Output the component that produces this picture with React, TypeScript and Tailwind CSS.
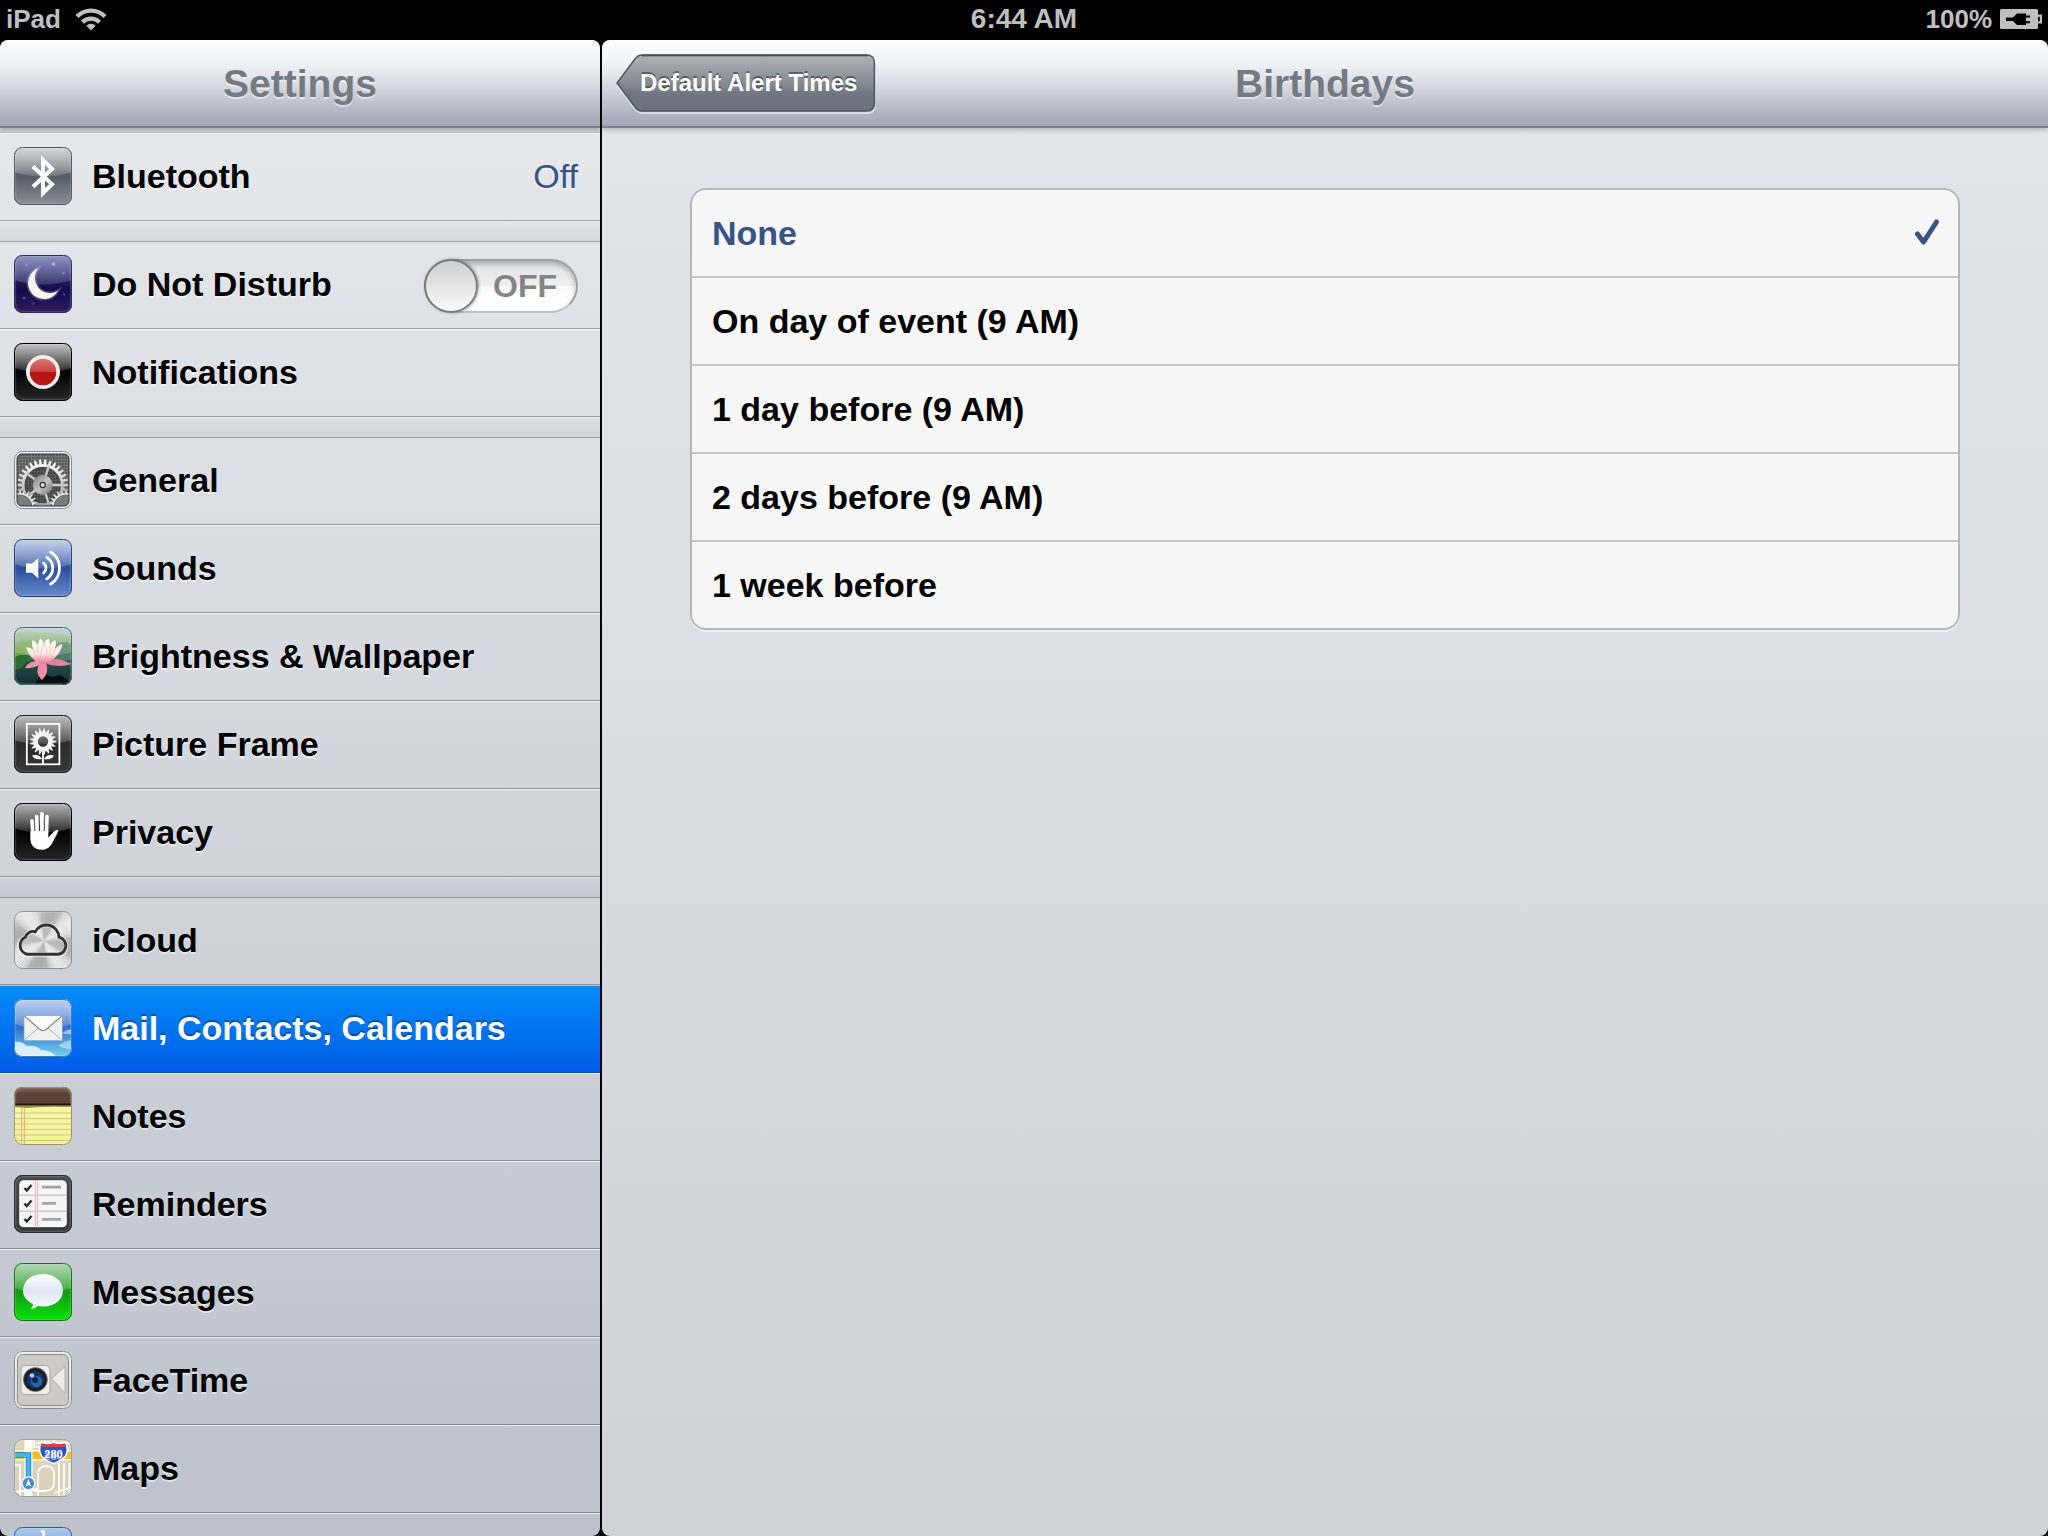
import React, { useState } from 'react';

type IconProps = { id: string };

// ---------- icon helpers ----------

const polar = (cx: number, cy: number, r: number, deg: number) => {
  const a = (deg * Math.PI) / 180;
  return `${(cx + r * Math.cos(a)).toFixed(2)} ${(cy + r * Math.sin(a)).toFixed(2)}`;
};

const cogPath = (cx: number, cy: number, rOut: number, rIn: number, teeth: number, tip = 0.14, root = 0.32) => {
  const step = 360 / teeth;
  let d = '';
  for (let i = 0; i < teeth; i++) {
    const a = i * step;
    d += `${i === 0 ? 'M' : 'L'}${polar(cx, cy, rIn, a - step * root)} L${polar(cx, cy, rOut, a - step * tip)} L${polar(cx, cy, rOut, a + step * tip)} L${polar(cx, cy, rIn, a + step * root)} `;
  }
  return d + 'Z';
};

const Tile: React.FC<{
  id: string;
  stops: [string, string][];
  edge: string;
  gloss?: boolean;
  glossTop?: number;
  children?: React.ReactNode;
  over?: React.ReactNode;
}> = ({ id, stops, edge, gloss = true, glossTop = 0.65, children, over }) => (
  <svg viewBox="0 0 58 58" className="size-[58px] shrink-0" aria-hidden="true">
    <defs>
      <linearGradient id={`${id}-bg`} x1="0" y1="0" x2="0" y2="1">
        {stops.map(([offset, color]) => (
          <stop key={offset} offset={offset} stopColor={color} />
        ))}
      </linearGradient>
      <linearGradient id={`${id}-gloss`} x1="0" y1="0" x2="0" y2="1">
        <stop offset="0" stopColor="#fff" stopOpacity={glossTop} />
        <stop offset="1" stopColor="#fff" stopOpacity="0.15" />
      </linearGradient>
      <clipPath id={`${id}-clip`}>
        <rect width="58" height="58" rx="8.5" />
      </clipPath>
    </defs>
    <g clipPath={`url(#${id}-clip)`}>
      <rect width="58" height="58" fill={`url(#${id}-bg)`} />
      {children}
      {gloss && <path d="M0 0H58V25Q29 34 0 25Z" fill={`url(#${id}-gloss)`} />}
      {over}
    </g>
    <rect x="1.6" y="1.6" width="54.8" height="54.8" rx="7.2" fill="none" stroke="#fff" strokeOpacity="0.18" />
    <rect x="0.5" y="0.5" width="57" height="57" rx="8" fill="none" stroke={edge} />
  </svg>
);

// ---------- sidebar icons ----------

const BluetoothIcon = ({ id }: IconProps) => (
  <Tile
    id={id}
    edge="#55595f"
    glossTop={0.65}
    stops={[['0', '#8d9096'], ['0.5', '#565c66'], ['1', '#8b8f94']]}
    over={<path d="M19 19.5L38 37.2L29 46V13L38 22L19 39.8" fill="none" stroke="#fff" strokeWidth="4" strokeMiterlimit="10" />}
  />
);

const MoonIcon = ({ id }: IconProps) => (
  <Tile
    id={id}
    edge="#2b2d66"
    glossTop={0.42}
    stops={[['0', '#3d4796'], ['0.48', '#1b1455'], ['0.6', '#140b4c'], ['1', '#321a5e']]}
    over={
      <>
        <g fill="#b9bfe8">
          <circle cx="39.5" cy="9" r="1.8" opacity="0.8" />
          <circle cx="12.5" cy="10" r="1.3" opacity="0.5" />
          <circle cx="49.5" cy="18" r="1.2" opacity="0.5" />
          <circle cx="50" cy="39.5" r="1.1" opacity="0.4" />
          <circle cx="10" cy="43" r="1.5" opacity="0.35" />
          <circle cx="19.5" cy="48.5" r="1.3" opacity="0.25" />
        </g>
        <path d="M24.5 13A16 16 0 1 0 44 35.8A15.2 15.2 0 0 1 24.5 13Z" fill="none" stroke="#aaa6d8" strokeWidth="3" opacity="0.35" />
        <path d="M24.5 13A16 16 0 1 0 44 35.8A15.2 15.2 0 0 1 24.5 13Z" fill="#f8f6ee" />
      </>
    }
  />
);

const NotificationsIcon = ({ id }: IconProps) => (
  <Tile
    id={id}
    edge="#000"
    glossTop={0.75}
    stops={[['0', '#1d1d1d'], ['0.5', '#000'], ['1', '#2a2a2a']]}
    over={
      <>
        <defs>
          <linearGradient id={`${id}-red`} x1="0" y1="0" x2="0" y2="1">
            <stop offset="0" stopColor="#dc7a78" />
            <stop offset="0.48" stopColor="#c8433f" />
            <stop offset="0.52" stopColor="#b41412" />
            <stop offset="1" stopColor="#bd1917" />
          </linearGradient>
        </defs>
        <circle cx="29" cy="29" r="17" fill="#efefef" />
        <circle cx="29" cy="29" r="13.3" fill={`url(#${id}-red)`} />
      </>
    }
  />
);

const GeneralIcon = ({ id }: IconProps) => (
  <svg viewBox="0 0 58 58" className="size-[58px] shrink-0" aria-hidden="true">
    <defs>
      <pattern id={`${id}-mesh`} width="3" height="3" patternUnits="userSpaceOnUse">
        <rect width="3" height="3" fill="#747474" />
        <circle cx="1" cy="1" r="0.8" fill="#333" />
      </pattern>
      <linearGradient id={`${id}-cog`} x1="0" y1="0" x2="0" y2="1">
        <stop offset="0" stopColor="#fff" />
        <stop offset="0.55" stopColor="#c4c4c4" />
        <stop offset="1" stopColor="#999" />
      </linearGradient>
      <linearGradient id={`${id}-hub`} x1="0" y1="0" x2="1" y2="1">
        <stop offset="0" stopColor="#777" />
        <stop offset="0.5" stopColor="#c4c4c4" />
        <stop offset="1" stopColor="#707070" />
      </linearGradient>
      <clipPath id={`${id}-clip`}>
        <rect x="3" y="3" width="52" height="52" rx="5" />
      </clipPath>
    </defs>
    <rect x="0.5" y="0.5" width="57" height="57" rx="8" fill="#f0f0f0" stroke="#8b8b8b" />
    <g clipPath={`url(#${id}-clip)`}>
      <rect width="58" height="58" fill={`url(#${id}-mesh)`} />
      <circle cx="28.700" cy="34" r="17.500" fill="#222" opacity="0.35" />
      <path
        d={`${cogPath(28.7, 34, 25.5, 21, 30, 0.18, 0.32)} M46.7 34A18 18 0 1 0 10.7 34A18 18 0 1 0 46.7 34Z`}
        fill={`url(#${id}-cog)`}
        fillRule="evenodd"
      />
      <circle cx="28.7" cy="34" r="17.6" fill="none" stroke="#333" strokeWidth="0.8" />
      {[-72, 0, 72, 144, 216].map((deg) => (
        <path key={deg} d={`M${polar(28.7, 34, 6, deg)} L${polar(28.7, 34, 20, deg)}`} stroke="#c9c9c9" strokeWidth="2.4" />
      ))}
      <circle cx="28.7" cy="34" r="10" fill={`url(#${id}-hub)`} />
      <circle cx="28.7" cy="34" r="2.6" fill="#ddd" stroke="#333" strokeWidth="1.2" />
      <path d={cogPath(6, 56, 18, 14, 24)} fill="#f0f0f0" stroke="#444" strokeWidth="0.4" />
      <circle cx="6" cy="56" r="12" fill="#7b7b7b" stroke="#666" />
      <path d={cogPath(52, 56, 18, 14, 24)} fill="#f0f0f0" stroke="#444" strokeWidth="0.4" />
      <circle cx="52" cy="56" r="12" fill="#7b7b7b" stroke="#666" />
    </g>
    <rect x="3" y="3" width="52" height="52" rx="5" fill="none" stroke="#333" />
  </svg>
);

const SoundsIcon = ({ id }: IconProps) => (
  <Tile
    id={id}
    edge="#26417c"
    glossTop={0.65}
    stops={[['0', '#5f82c8'], ['0.5', '#2a4d9c'], ['1', '#6b8dcc']]}
    over={
      <>
        <path d="M12 24.5H18L24.3 19V39.5L18 33.8H12Z" fill="#fff" />
        <g fill="none" stroke="#fff" strokeWidth="2.8" strokeLinecap="round">
          <path d="M29.6 24.2A6.2 6.2 0 0 1 29.6 34" />
          <path d="M32.8 18.4A12.6 12.6 0 0 1 32.8 39.8" />
          <path d="M36.6 13A19 19 0 0 1 36.6 45.2" />
        </g>
      </>
    }
  />
);

const LotusIcon = ({ id }: IconProps) => (
  <Tile
    id={id}
    edge="#45705f"
    glossTop={0.35}
    stops={[['0', '#a9c58e'], ['0.35', '#6d9a6c'], ['0.6', '#24504c'], ['1', '#122c30']]}
  >
    <defs>
      <linearGradient id={`${id}-petal`} x1="0" y1="0" x2="0" y2="1">
        <stop offset="0" stopColor="#fffdf2" />
        <stop offset="0.6" stopColor="#fce4de" />
        <stop offset="1" stopColor="#e87590" />
      </linearGradient>
    </defs>
    <path d="M0 6Q18 2 58 9V0H0Z" fill="#9dbccb" />
    <path d="M0 17Q14 11 30 16L14 34L0 40Z" fill="#6aa548" />
    <path d="M0 30Q10 26 18 29L6 42L0 43Z" fill="#2c6f30" />
    <path d="M40 18Q52 12 58 18V32Q48 36 40 32Z" fill="#4a7c62" />
    <path d="M20 58L28 46L38 50L46 48L58 56V58Z" fill="#050d0e" />
    <path d="M27 33Q14 34 11 41Q20 42 29 36Z" fill="#f297a8" />
    <path d="M33 32Q46 31 58 37Q46 41 33 37Z" fill="#e87f98" />
    <path d="M26 35Q20 46 28 53Q36 46 32 35Z" fill="#f08ba2" />
    <path d="M29.500 37Q16 34 12 20Q16 20 19.500 23Q17 17 18.500 13Q22 14.500 24 18Q24 14 26.500 11.500Q29 14 30 17Q31 13 34.500 11.500Q36 14 36 18Q38 14.500 41.500 13Q42.500 18 41 22Q45 17.500 48.500 17Q45 32 29.500 37Z" fill={`url(#${id}-petal)`} />
    <g fill="none" stroke="#e9a9b2" strokeWidth="0.700">
      <path d="M19.500 23Q22 30 28 35M24 18Q22 27 28 34M36 18Q38 27 31 34M41 22Q39 30 32 35M30 17Q24 26 29 34Q36 26 30 17" />
    </g>
  </Tile>
);

const FrameIcon = ({ id }: IconProps) => (
  <Tile
    id={id}
    edge="#1f1f1f"
    glossTop={0.65}
    stops={[['0', '#4a4a4a'], ['0.5', '#2b2b2b'], ['1', '#383838']]}
    over={
      <>
        <rect x="12.8" y="8.9" width="32.600" height="40.400" fill="none" stroke="#fff" strokeWidth="1.8" />
        <path
          d={`${cogPath(29, 26.5, 13.3, 9.6, 17, 0.08, 0.46)} M34.2 26.5A5.2 5.2 0 1 0 23.8 26.5A5.2 5.2 0 1 0 34.2 26.5Z`}
          fill="#f5f5f5"
          fillRule="evenodd"
        />
        <path d="M29 36V49" stroke="#fff" strokeWidth="1.8" />
        <path d="M28 44Q21 45.500 18 40.500Q25 38.500 28 44ZM30 44Q37 45.500 40 40.500Q33 38.500 30 44Z" fill="#fff" />
      </>
    }
  />
);

const PrivacyIcon = ({ id }: IconProps) => (
  <Tile
    id={id}
    edge="#000"
    glossTop={0.65}
    stops={[['0', '#2e2e2e'], ['0.5', '#020202'], ['1', '#262626']]}
    over={
      <g stroke="#fff" strokeLinecap="round" fill="none">
        <path d="M18 17.700L19 33" strokeWidth="3.600" />
        <path d="M22.700 13.500L23.200 30" strokeWidth="3.600" />
        <path d="M27.900 11L27.900 30" strokeWidth="3.800" />
        <path d="M33 13.500L32.500 30" strokeWidth="3.600" />
        <path d="M16.300 28H34.300V34.500L40 28.500Q42.500 26 44.500 27.500C43.500 31 41 34 39 38.500C36.500 44 33 46.800 28 46.800C20.500 46.800 16.600 42.500 16.400 36Z" fill="#fff" stroke="none" />
      </g>
    }
  />
);

const CloudIcon = ({ id }: IconProps) => (
  <Tile id={id} edge="#8f8f8f" gloss={false} stops={[['0', '#cbcbcb'], ['1', '#c2c2c2']]}>
    {/* brushed steel rays */}
    {[0, 45, 90, 135, 180, 225, 270, 315].map((deg, i) =>
      [24, 17, 10].map((spread) => (
        <path
          key={`${deg}-${spread}`}
          d={`M30 30L${polar(30, 30, 50, deg + 12 - spread)}L${polar(30, 30, 50, deg + 12 + spread)}Z`}
          fill={i % 2 ? '#fff' : '#848484'}
          opacity={i % 2 ? 0.24 : 0.14}
        />
      )),
    )}
    <path
      d="M13.500 43.800A9 9 0 0 1 11.500 26.200A7.600 7.600 0 0 1 21.200 20.800A12.600 12.600 0 0 1 45 26.200A8.900 8.900 0 0 1 44.500 43.800Z"
      fill="#fff"
      fillOpacity="0.15"
      stroke="#fff"
      strokeOpacity="0.6"
      strokeWidth="4.600"
    />
    <path
      d="M13.500 43.300A9 9 0 0 1 11.500 26.200A7.600 7.600 0 0 1 21.200 20.800A12.600 12.600 0 0 1 45 26.200A8.700 8.700 0 0 1 44.500 43.300Z"
      fill="none"
      stroke="#333"
      strokeWidth="2.900"
    />
  </Tile>
);

const MailIcon = ({ id }: IconProps) => (
  <Tile
    id={id}
    edge="#3f78b8"
    glossTop={0.55}
    stops={[['0', '#6f9be2'], ['0.5', '#2f6fcb'], ['0.75', '#4ba4e0'], ['1', '#7fd0ee']]}
    over={
      <>
        <g fill="#fff">
          <path d="M0 43Q8 42 13 47Q22 46 27 51Q38 51 42 58H0Z" opacity="0.75" />
          <path d="M44 47Q50 42 58 41V50Q50 50 44 47Z" opacity="0.45" />
          <path d="M48 34Q52 31 58 30V35Q52 36 48 34Z" opacity="0.5" />
        </g>
        <rect x="10" y="16.500" width="38.300" height="25.200" fill="#f1f1f1" stroke="#8aa0ba" strokeWidth="0.700" />
        <path d="M10.500 41L24.500 29M47.800 41L33.800 29" stroke="#a8a8a8" strokeWidth="0.900" />
        <path d="M10.500 17L29 33L47.800 17Z" fill="#fdfdfd" />
        <path d="M10.500 17L26 30.500Q29 33 32 30.500L47.800 17" fill="none" stroke="#8a8a8a" strokeWidth="1.200" />
      </>
    }
  />
);

const NotesIcon = ({ id }: IconProps) => (
  <Tile id={id} edge="#9a9468" gloss={false} stops={[['0', '#faf6a8'], ['1', '#f6f29a']]}>
    {[26, 31.5, 37, 42.5, 48, 53.5].map((y) => (
      <path key={y} d={`M0 ${y}H58`} stroke="#c4c386" strokeWidth="0.900" />
    ))}
    <path d="M7.700 19V58M10.400 19V58" stroke="#d6a070" strokeWidth="0.800" />
    <path d="M0 18H58V20Q30 19 14 21L0 20Z" fill="#8f8a4d" />
    <rect width="58" height="17" fill="#5d443b" />
    <rect width="58" height="5" fill="#6d544b" />
    <rect y="16.500" width="58" height="1.800" fill="#1f1310" />
  </Tile>
);

const RemindersIcon = ({ id }: IconProps) => (
  <Tile id={id} edge="#2a2b2c" gloss={false} stops={[['0', '#4c4e50'], ['1', '#3a3b3c']]}>
    <rect x="4.700" y="4.700" width="48.600" height="48" rx="5" fill="#f5f5f5" stroke="#1c1c1c" strokeWidth="0.800" />
    <path d="M5 20.200H53M5 36.200H53" stroke="#b9b9b9" strokeWidth="1" />
    <path d="M21.400 5V52.500M23.600 5V52.500" stroke="#f2a9b4" strokeWidth="0.900" />
    <path d="M28 12.200H47M28 28.300H42M28 44.300H47" stroke="#a3a3a3" strokeWidth="2.800" />
    {[8.5, 24, 39.5].map((y) => (
      <path key={y} d={`M10.500 ${y + 4.5}L12.800 ${y + 7}L17.500 ${y + 1.5}`} fill="none" stroke="#2b2b2b" strokeWidth="2.400" />
    ))}
  </Tile>
);

const MessagesIcon = ({ id }: IconProps) => (
  <Tile
    id={id}
    edge="#1f6d22"
    glossTop={0.6}
    stops={[['0', '#3f9e41'], ['0.5', '#129a12'], ['1', '#06e406']]}
    over={
      <>
        <defs>
          <linearGradient id={`${id}-bubble`} x1="0" y1="0" x2="0" y2="1">
            <stop offset="0" stopColor="#fff" />
            <stop offset="0.5" stopColor="#dfe7f3" />
            <stop offset="1" stopColor="#fafcff" />
          </linearGradient>
        </defs>
        <path
          d="M29 11C40.500 11 49 18 49 27.500C49 37 40.500 43.500 29 43.500C27 43.500 25.500 43.300 24 43C21.500 45 19 46 16.500 46C18 44.500 19 43 19 41C12.800 38.300 9 33.500 9 27.500C9 18 17.500 11 29 11Z"
          fill={`url(#${id}-bubble)`}
        />
      </>
    }
  />
);

const FaceTimeIcon = ({ id }: IconProps) => (
  <Tile id={id} edge="#8a8a88" gloss={false} stops={[['0', '#efefee'], ['1', '#dededc']]}>
    <rect x="3.500" y="3.500" width="51" height="51" rx="5" fill="#cbcac6" stroke="#8c8b88" />
    <rect x="7" y="14.500" width="29" height="29" rx="4.500" fill="#efefef" stroke="#a9a9a7" />
    <path d="M37.700 27.800L51 15.500V42Z" fill="#ececec" stroke="#a9a9a7" strokeWidth="0.800" />
    <circle cx="21.400" cy="28.600" r="12" fill="#1c1e22" stroke="#777" strokeWidth="0.800" />
    <circle cx="21.400" cy="28.600" r="8.600" fill="#12356b" />
    <circle cx="22.500" cy="30.500" r="5.500" fill="#2a63ad" />
    <circle cx="21" cy="29" r="3" fill="#0d2348" />
    <circle cx="18" cy="24.500" r="2.300" fill="#a9cdf0" />
  </Tile>
);

const MapsIcon = ({ id }: IconProps) => (
  <Tile id={id} edge="#a09c92" gloss={false} stops={[['0', '#e0d6c0'], ['1', '#dad0ba']]}>
    <path d="M20 0V8H28V3H34V8M22 4H58M40 0V8" fill="none" stroke="#fffdf7" strokeWidth="2" />
    <path d="M0 26H6V58M24 58V36Q24 27 32 27Q40 27 40 36V44Q40 52 30 52H20M45 24V58M50 24V56M55.500 24V58M40 54L58 48M0 53L24 50" fill="none" stroke="#fffdf7" strokeWidth="1.800" />
    <rect y="11" width="58" height="10.500" fill="#fff8e2" />
    <rect y="12.500" width="58" height="7.500" fill="#f7bb1d" />
    <rect x="10.500" width="8" height="58" fill="#fffdf7" />
    <path d="M0 16H14.500V40" fill="none" stroke="#1f7fc4" strokeWidth="5.400" />
    <path d="M0 16H14.500V40" fill="none" stroke="#3db4f5" strokeWidth="3.800" />
    <circle cx="14.400" cy="44.300" r="6.400" fill="#3f8fd2" stroke="#fff" strokeWidth="1.200" />
    <path d="M14.400 40L17.200 47.500L14.400 46L11.600 47.500Z" fill="#fff" />
    <path d="M27 3.500Q33 5.500 39.500 3.500Q46 5.500 51.500 3.500Q55 11 51.500 17Q47 22 39.500 24.500Q32 22 27.500 17Q24 11 27 3.500Z" fill="#2558c4" stroke="#fff" strokeWidth="1.500" />
    <path d="M27.600 4.500Q33 6 39.500 4.500Q46 6 51 4.500L52.200 8H26.600Z" fill="#d8404b" />
    <text x="39.500" y="18.500" textAnchor="middle" fontSize="11" fontWeight="700" fill="#fff" fontFamily="Liberation Sans, sans-serif">
      280
    </text>
  </Tile>
);

const SafariIcon = ({ id }: IconProps) => (
  <Tile
    id={id}
    edge="#2f5795"
    glossTop={0.45}
    stops={[['0', '#6f9ddf'], ['1', '#2f66bd']]}
    over={
      <>
        <circle cx="29" cy="32" r="21" fill="none" stroke="#fff" strokeWidth="3" />
        <path d="M27 4L31 7M29.500 3V9" stroke="#fff" strokeWidth="2" />
      </>
    }
  />
);

// ---------- status bar glyphs ----------

const WifiGlyph = () => (
  <svg viewBox="0 0 32 24" className="h-6 w-8" aria-hidden="true">
    <g fill="none" stroke="#bfbfbf" strokeWidth="4.200">
      <path d="M2 9.500A19.500 19.500 0 0 1 30 9.500" />
      <path d="M7.500 15.200A12 12 0 0 1 24.500 15.200" />
    </g>
    <path d="M16 23.500L11.300 18.700A6.600 6.600 0 0 1 20.700 18.700Z" fill="#bfbfbf" />
  </svg>
);

const BatteryGlyph = () => (
  <svg viewBox="0 0 42 20" className="h-5 w-[42px]" aria-hidden="true">
    <rect width="38" height="20" rx="1.500" fill="#bfbfbf" />
    <path d="M38 5.500H42V14.500H38V12.300H39.800V7.700H38Z" fill="#bfbfbf" />
    <path d="M6 8.500H13L17 4.500H26V6.500H30V8.500H26V12.300H30V14.300H26V16H17L13 12H6Z" fill="#000" />
  </svg>
);

// ---------- data ----------

interface SettingsItem {
  id: string;
  label?: string;
  Icon: React.FC<IconProps>;
  value?: string;
  toggle?: boolean;
}

const GROUPS: SettingsItem[][] = [
  [{ id: 'bluetooth', label: 'Bluetooth', Icon: BluetoothIcon, value: 'Off' }],
  [
    { id: 'dnd', label: 'Do Not Disturb', Icon: MoonIcon, toggle: true },
    { id: 'notifications', label: 'Notifications', Icon: NotificationsIcon },
  ],
  [
    { id: 'general', label: 'General', Icon: GeneralIcon },
    { id: 'sounds', label: 'Sounds', Icon: SoundsIcon },
    { id: 'wallpaper', label: 'Brightness & Wallpaper', Icon: LotusIcon },
    { id: 'frame', label: 'Picture Frame', Icon: FrameIcon },
    { id: 'privacy', label: 'Privacy', Icon: PrivacyIcon },
  ],
  [
    { id: 'icloud', label: 'iCloud', Icon: CloudIcon },
    { id: 'mail', label: 'Mail, Contacts, Calendars', Icon: MailIcon },
    { id: 'notes', label: 'Notes', Icon: NotesIcon },
    { id: 'reminders', label: 'Reminders', Icon: RemindersIcon },
    { id: 'messages', label: 'Messages', Icon: MessagesIcon },
    { id: 'facetime', label: 'FaceTime', Icon: FaceTimeIcon },
    { id: 'maps', label: 'Maps', Icon: MapsIcon },
    { id: 'safari', Icon: SafariIcon },
  ],
];

const ALERT_TIMES = ['None', 'On day of event (9 AM)', '1 day before (9 AM)', '2 days before (9 AM)', '1 week before'];

// ---------- pieces ----------

const Switch: React.FC<{ id: string; checked: boolean; onChange: (on: boolean) => void }> = ({ id, checked, onChange }) => (
  <span className="relative mt-1 flex h-[54px] w-[154px] items-center rounded-full border-2 border-[#a0a0a0] border-b-[#c0c0c0] bg-[linear-gradient(to_bottom,#e2e2e2_0%,#f0f0f0_50%,#fafafa_51%,#ffffff_100%)] shadow-[inset_0_3px_5px_rgba(0,0,0,0.25)]">
    <input
      id={id}
      type="checkbox"
      role="switch"
      checked={checked}
      onChange={(e) => onChange(e.target.checked)}
      className="peer absolute inset-0 z-10 cursor-pointer opacity-0"
    />
    <span className="-ml-[2px] size-[54px] shrink-0 rounded-full border-2 border-[#7c7c7c] bg-linear-to-b from-[#cfcfcf] to-[#fafafa] shadow-[1px_0_3px_rgba(0,0,0,0.35)] peer-checked:order-last" />
    <span className="flex-1 pr-1 text-center text-[32px] leading-none font-bold text-[#858585]">{checked ? 'ON' : 'OFF'}</span>
  </span>
);

const TitleBar: React.FC<{ title: string; children?: React.ReactNode }> = ({ title, children }) => (
  <header className="relative z-10 grid h-[88px] shrink-0 grid-cols-[1fr_auto_1fr] items-center rounded-t-lg border-b-2 border-[#7e8196] bg-[linear-gradient(to_bottom,#fdfdfe_0%,#f3f4f7_25%,#e4e5ea_42%,#cdcfd8_62%,#b5b7c4_82%,#a2a7b4_100%)] px-[14px] shadow-[0_2px_4px_rgba(0,0,0,0.2)]">
    <div className="flex">{children}</div>
    <h1 className="text-[39px] leading-none font-bold text-[#737a82] [text-shadow:0_2px_0_rgba(255,255,255,0.5)]">{title}</h1>
    <div />
  </header>
);

const BackButton: React.FC<{ label: string }> = ({ label }) => (
  <button type="button" className="relative flex h-[58px] items-center pr-[18px] pl-6">
    <svg viewBox="0 0 260 58" preserveAspectRatio="none" className="absolute inset-0 size-full overflow-visible" aria-hidden="true">
      <defs>
        <linearGradient id="back-fill" x1="0" y1="0" x2="0" y2="1">
          <stop offset="0" stopColor="#b0b2b7" />
          <stop offset="0.5" stopColor="#868b93" />
          <stop offset="0.7" stopColor="#6f7680" />
          <stop offset="1" stopColor="#6b727c" />
        </linearGradient>
      </defs>
      <path d="M26 3H252Q259 3 259 10V52Q259 59 252 59H26Q22 59 19 55L1 31" fill="none" stroke="#fff" strokeOpacity="0.5" strokeWidth="2" />
      <path d="M26 1H251Q259 1 259 9V49Q259 57 251 57H26Q22 57 19 53L1 29L19 5Q22 1 26 1Z" fill="url(#back-fill)" stroke="#50555e" strokeWidth="1.500" />
      <path d="M26 1.500H252" stroke="#3f434a" strokeWidth="2" opacity="0.7" />
    </svg>
    <span className="relative text-2xl leading-none font-bold whitespace-nowrap text-white [text-shadow:0_-2px_0_rgba(0,0,0,0.4)]">{label}</span>
  </button>
);

const SidebarRow: React.FC<{ item: SettingsItem; selected: boolean; onSelect: () => void }> = ({ item, selected, onSelect }) => {
  const [on, setOn] = useState(false);
  const { id, label, Icon, value, toggle } = item;

  if (toggle) {
    return (
      <div className="flex h-[88px] items-center border-t border-b border-t-white/70 border-b-black/30 pr-[22px] pb-0.5 pl-[14px] group-first/row:border-t-black/30">
        <Icon id={`ic-${id}`} />
        <label
          htmlFor={`${id}-switch`}
          className="ml-5 flex-1 text-[34px] leading-none font-bold [text-shadow:0_2px_0_rgba(255,255,255,0.5)]"
        >
          {label}
        </label>
        <Switch id={`${id}-switch`} checked={on} onChange={setOn} />
      </div>
    );
  }

  return (
    <a
      href={`#${id}`}
      onClick={onSelect}
      aria-label={label ?? id}
      aria-current={selected ? 'page' : undefined}
      className={`flex h-[88px] items-center border-t border-b pr-[22px] pb-0.5 pl-[14px] ${
        selected
          ? 'border-t-[#a5cdf2] border-b-[#0150c8] bg-linear-to-b from-[#058cf7] to-[#015ce6] text-white [text-shadow:0_-2px_0_rgba(0,0,0,0.35)]'
          : 'border-t-white/70 border-b-black/30 [text-shadow:0_2px_0_rgba(255,255,255,0.5)] group-first/row:border-t-black/30'
      }`}
    >
      <Icon id={`ic-${id}`} />
      {label && <span className="ml-5 flex-1 text-[34px] leading-none font-bold whitespace-nowrap">{label}</span>}
      {value && <span className="text-[34px] leading-none text-[#385487]">{value}</span>}
    </a>
  );
};

export default function App() {
  const [section, setSection] = useState('mail');
  const [alertTime, setAlertTime] = useState('None');

  return (
    <div className="flex h-screen flex-col overflow-hidden bg-black font-['Liberation_Sans',Arial,sans-serif] text-black">
      {/* Status bar */}
      <div className="grid h-10 shrink-0 grid-cols-[1fr_auto_1fr] items-center px-[6px] pb-0.5 font-bold text-[#bfbfbf]">
        <div className="flex items-center gap-[14px]">
          <span className="text-[26px] leading-none">iPad</span>
          <WifiGlyph />
        </div>
        <div className="text-[28px] leading-none">6:44 AM</div>
        <div className="flex items-center justify-end gap-2">
          <span className="text-[26px] leading-none">100%</span>
          <BatteryGlyph />
        </div>
      </div>

      <div className="flex min-h-0 flex-1 gap-[2px]">
        {/* Sidebar */}
        <aside className="flex w-[600px] shrink-0 flex-col overflow-hidden rounded-lg bg-linear-to-b from-[#e8eaed] to-[#bdc2cb]">
          <TitleBar title="Settings" />
          <nav className="min-h-0 flex-1 overflow-hidden border-t-4 border-[#d0d2d6]">
            <div className="border-t border-black/20">
              {GROUPS.map((group, i) => (
                <React.Fragment key={group[0].id}>
                  {i > 0 && <div className="h-5 border-t border-white/50 bg-linear-to-b from-black/0 to-[#5a6a80]/10" />}
                  <ul>
                    {group.map((item) => (
                      <li key={item.id} className={i > 0 ? 'group/row' : undefined}>
                        <SidebarRow item={item} selected={item.id === section} onSelect={() => setSection(item.id)} />
                      </li>
                    ))}
                  </ul>
                </React.Fragment>
              ))}
            </div>
          </nav>
        </aside>

        {/* Detail */}
        <main className="flex min-w-0 flex-1 flex-col overflow-hidden rounded-lg bg-linear-to-b from-[#e2e6eb] to-[#d1d2d7]">
          <TitleBar title="Birthdays">
            <BackButton label="Default Alert Times" />
          </TitleBar>
          <fieldset
            aria-label="Birthdays"
            className="mx-[88px] mt-[60px] overflow-hidden rounded-2xl border-2 border-[#b4b6ba] bg-[#f7f7f7] shadow-[0_2px_0_rgba(255,255,255,0.6)]"
          >
            {ALERT_TIMES.map((time) => (
              <label
                key={time}
                className="flex h-[88px] cursor-pointer items-center justify-between border-b-2 border-[#c6c6c8] pr-[18px] pl-5 text-[34px] leading-none font-bold last:h-[86px] last:border-b-0 has-checked:text-[#385487]"
              >
                <input
                  type="radio"
                  name="alert-time"
                  checked={alertTime === time}
                  onChange={() => setAlertTime(time)}
                  className="sr-only"
                />
                <span>{time}</span>
                {alertTime === time && (
                  <svg viewBox="0 0 26 28" className="h-7 w-[26px]" aria-hidden="true">
                    <path d="M3.500 15L9.500 23L22.500 3" fill="none" stroke="#385487" strokeWidth="5" strokeLinecap="round" strokeLinejoin="round" />
                  </svg>
                )}
              </label>
            ))}
          </fieldset>
        </main>
      </div>
    </div>
  );
}
